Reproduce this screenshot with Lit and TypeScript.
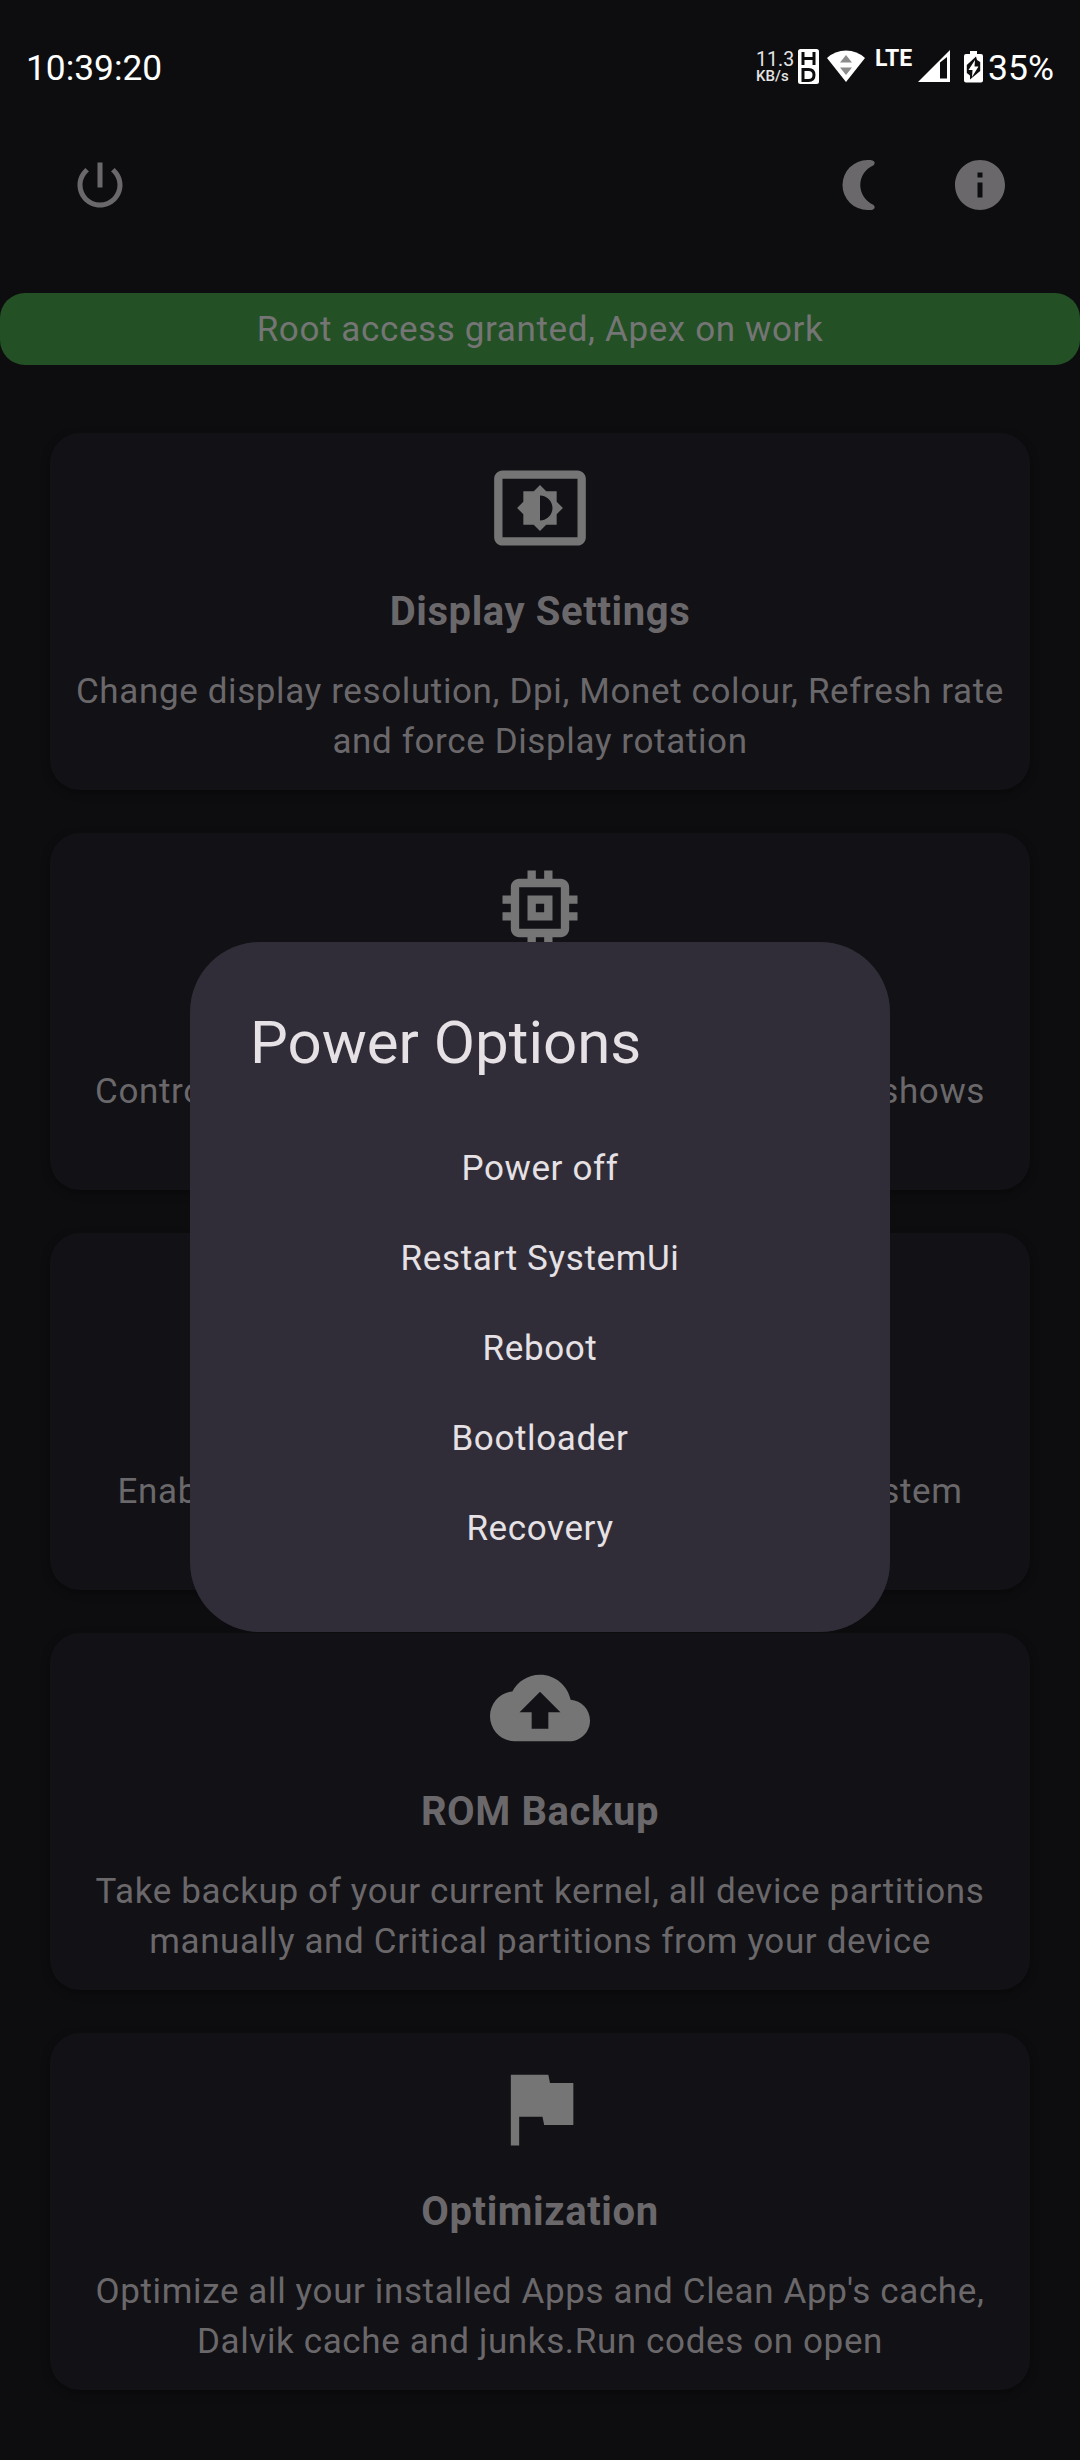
import { LitElement, html, svg, css } from "lit";
import { customElement } from "lit/decorators.js";

const paths = {
  power:
    "M13 3h-2v10h2V3zm4.83 2.17l-1.42 1.42C17.99 7.86 19 9.81 19 12c0 3.87-3.13 7-7 7s-7-3.13-7-7c0-2.19 1.01-4.14 2.58-5.42L6.17 5.17C4.23 6.82 3 9.26 3 12c0 4.97 4.03 9 9 9s9-4.03 9-9c0-2.74-1.23-5.18-3.17-6.83z",
  info: "M12 2C6.48 2 2 6.48 2 12s4.48 10 10 10 10-4.48 10-10S17.52 2 12 2zm1 15h-2v-6h2v6zm0-8h-2V7h2v2z",
  moon: "M12.2 2a10 10 0 0 0 0 20c.75 0 1.5-.03 2-.15 1.100-.3 1.100-1.500.25-2A8.700 8.700 0 0 1 9.300 12a8.700 8.700 0 0 1 5.150-7.850c.85-.5.85-1.700-.25-2-.5-.12-1.250-.15-2-.15z",
  brightness:
    "M21 3H3c-1.1 0-2 .9-2 2v14c0 1.1.9 2 2 2h18c1.1 0 2-.9 2-2V5c0-1.1-.9-2-2-2zm0 16.01H3V4.99h18v14.02zM8 16h2.5l1.5 1.5 1.5-1.5H16v-2.5l1.5-1.5-1.5-1.5V8h-2.5L12 6.5 10.5 8H8v2.5L6.5 12 8 13.5V16zm4-7c1.66 0 3 1.34 3 3s-1.34 3-3 3V9z",
  memory:
    "M15 9H9v6h6V9zm-2 4h-2v-2h2v2zm8-2V9h-2V7c0-1.1-.9-2-2-2h-2V3h-2v2h-2V3H9v2H7c-1.1 0-2 .9-2 2v2H3v2h2v2H3v2h2v2c0 1.1.9 2 2 2h2v2h2v-2h2v2h2v-2h2c1.1 0 2-.9 2-2v-2h2v-2h-2v-2h2zm-4 6H7V7h10v10z",
  backup:
    "M19.35 10.04C18.67 6.59 15.64 4 12 4 9.11 4 6.6 5.64 5.35 8.04 2.34 8.36 0 10.91 0 14c0 3.31 2.69 6 6 6h13c2.76 0 5-2.24 5-5 0-2.64-2.05-4.78-4.65-4.96zM14 13v4h-4v-4H7.1L12 8.1l4.9 4.9H14z",
  flag: "M14.4 6L14 4H5v17h2v-6.9h5.6l.4 2h7V6z",
};

const icon = (d: string, cls: string) =>
  html`<svg class=${cls} viewBox="0 0 24 24">${svg`<path d=${d} fill-rule="evenodd"></path>`}</svg>`;

interface Feature {
  icon: string;
  title: string;
  lines?: string[];
  ends?: [string, string];
  size?: string;
}

const features: Feature[] = [
  {
    icon: paths.brightness,
    title: "Display Settings",
    lines: ["Change display resolution, Dpi, Monet colour, Refresh rate", "and force Display rotation"],
  },
  { icon: paths.memory, title: "", ends: ["Control", "shows"], size: "wide" },
  { icon: "", title: "", ends: ["Enable", "system"], size: "mid" },
  {
    icon: paths.backup,
    title: "ROM Backup",
    lines: ["Take backup of your current kernel, all device partitions", "manually and Critical partitions from your device"],
  },
  {
    icon: paths.flag,
    title: "Optimization",
    lines: ["Optimize all your installed Apps and Clean App's cache,", "Dalvik cache and junks.Run codes on open"],
  },
];

@customElement("status-bar")
class StatusBar extends LitElement {
  static styles = css`
    :host { display: flex; align-items: flex-start; height: 135px; padding: 0 26px 0 26px; box-sizing: border-box; color: #fff; }
    .clock, .percent { font-size: 35.5px; line-height: 42px; margin-top: 47px; white-space: nowrap; }
    .clock { flex: 1; font-size: 35.3px; }
    .speed { display: flex; flex-direction: column; margin-top: 51px; width: 42px; color: #e4e4e4; white-space: nowrap; }
    .rate { font-size: 19.5px; line-height: 18px; }
    .unit { font-size: 15px; line-height: 15px; font-weight: 500; }
    svg { display: block; flex: none; }
    .hd { width: 21px; height: 35px; margin: 49px 8px 0 0; }
    .wifi { width: 38px; height: 33px; margin: 50px 10px 0 0; }
    .lte { width: 43px; margin-top: 46px; font-size: 23px; line-height: 26px; font-weight: 700; }
    .signal { width: 32px; height: 32px; margin: 50px 14px 0 0; }
    .battery { width: 19px; height: 32px; margin: 51px 5px 0 0; }
  `;
  render() {
    return html`
      <span class="clock">10:39:20</span>
      <span class="speed"><span class="rate">11.3</span><span class="unit">KB/s</span></span>
      <svg class="hd" viewBox="0 0 21 35">
        <rect width="21" height="35" rx="2.5" fill="#fff" />
        <path d="M5 3v13M16 3v13M5 9.5h11" stroke="#0d0d0f" stroke-width="3" fill="none" />
        <path d="M5 20.5h5.5q5.500 0 5.500 5.500t-5.500 5.500h-5.500z" stroke="#0d0d0f" stroke-width="3" fill="none" />
      </svg>
      <svg class="wifi" viewBox="0 0 38 33">
        <path d="M0 8Q8 0.500 19 0.500T38 8L19 32z" fill="#fff" />
        <path d="M13 12.500L19 5l6 7.500zM13 17.500h12L19 25z" fill="#8c8c8c" />
      </svg>
      <span class="lte">LTE</span>
      <svg class="signal" viewBox="0 0 32 32">
        <path d="M0 32L32 0v32zM22 12.500V28.500h7V7z" fill="#fff" fill-rule="evenodd" />
      </svg>
      <svg class="battery" viewBox="0 0 19 32">
        <path d="M6 0h7v3h4q2 0 2 2v24.500q0 2-2 2H2q-2 0-2-2V5q0-2 2-2h4z" fill="#fff" />
        <path d="M12 5.500L2.800 14v8L6 24.500V28.500L16.200 20v-9L13 9z" fill="#0d0d0f" />
        <path d="M11 9L4.500 19h4L8 26l6.500-10.500h-4z" fill="#fff" />
      </svg>
      <span class="percent">35%</span>
    `;
  }
}

@customElement("feature-card")
class FeatureCard extends LitElement {
  static properties = { feature: { attribute: false } };
  declare feature: Feature;
  static styles = css`
    :host {
      display: flex; flex-direction: column; align-items: center; box-sizing: border-box;
      height: 357.5px; padding-top: 25px; border-radius: 30px; background: #121116;
      box-shadow: 0 3px 8px rgba(0, 0, 0, 0.35);
    }
    .glyph { display: block; width: 100px; height: 100px; fill: #757575; }
    .title { height: 60px; margin-top: 24px; font-size: 40px; line-height: 60px; font-weight: 700; letter-spacing: 0.6px; }
    .text { margin-top: 25px; line-height: 50px; text-align: center; white-space: nowrap; }
    .line { display: block; }
    .ends { display: flex; justify-content: space-between; }
    .wide { width: 890px; }
    .mid { width: 845px; }
  `;
  render() {
    const f = this.feature;
    return html`
      ${icon(f.icon, "glyph")}
      <div class="title">${f.title}</div>
      ${f.ends
        ? html`<div class="text ends ${f.size}"><span>${f.ends[0]}</span><span>${f.ends[1]}</span></div>`
        : html`<div class="text">${f.lines!.map((l) => html`<span class="line">${l}</span>`)}</div>`}
    `;
  }
}

@customElement("power-dialog")
class PowerDialog extends LitElement {
  static styles = css`
    :host {
      display: block; box-sizing: border-box; width: 700px; height: 690px; padding: 61px 60px 59px;
      border-radius: 70px; background: #302d38; color: #e6e1e5;
    }
    .heading { font-size: 60px; line-height: 80px; letter-spacing: 0; margin-bottom: 40px; }
    .option { line-height: 50px; padding: 21px 0 19px; text-align: center; }
  `;
  render() {
    return html`
      <div class="heading">Power Options</div>
      ${["Power off", "Restart SystemUi", "Reboot", "Bootloader", "Recovery"].map(
        (o) => html`<div class="option">${o}</div>`
      )}
    `;
  }
}

@customElement("app-root")
class AppRoot extends LitElement {
  static styles = css`
    :host {
      display: block; position: relative; width: 1080px; height: 2460px; overflow: hidden;
      background: #0d0d0f; font-family: Roboto, sans-serif;
    }
    .content { color: #6a686a; font-size: 35px; letter-spacing: 0.625px; }
    .toolbar { display: flex; align-items: center; height: 100px; padding: 0 70px; }
    .tool { display: block; width: 60px; height: 60px; fill: #6a686a; }
    .spacer { flex: 1; }
    .night { margin-right: 53px; }
    .banner {
      height: 72.5px; margin-top: 57.5px; line-height: 74.5px; border-radius: 25px;
      background: #235125; color: #757575; text-align: center;
    }
    .cards { display: flex; flex-direction: column; gap: 42.5px; padding: 67.5px 50px 0; }
    .dialog { position: absolute; left: 190px; top: 942.4px; font-size: 35px; letter-spacing: 0.625px; }
  `;
  render() {
    return html`
      <status-bar></status-bar>
      <div class="content">
        <div class="toolbar">
          ${icon(paths.power, "tool")}
          <div class="spacer"></div>
          ${icon(paths.moon, "tool night")} ${icon(paths.info, "tool")}
        </div>
        <div class="banner">Root access granted, Apex on work</div>
        <div class="cards">${features.map((f) => html`<feature-card .feature=${f}></feature-card>`)}</div>
      </div>
      <power-dialog class="dialog"></power-dialog>
    `;
  }
}
